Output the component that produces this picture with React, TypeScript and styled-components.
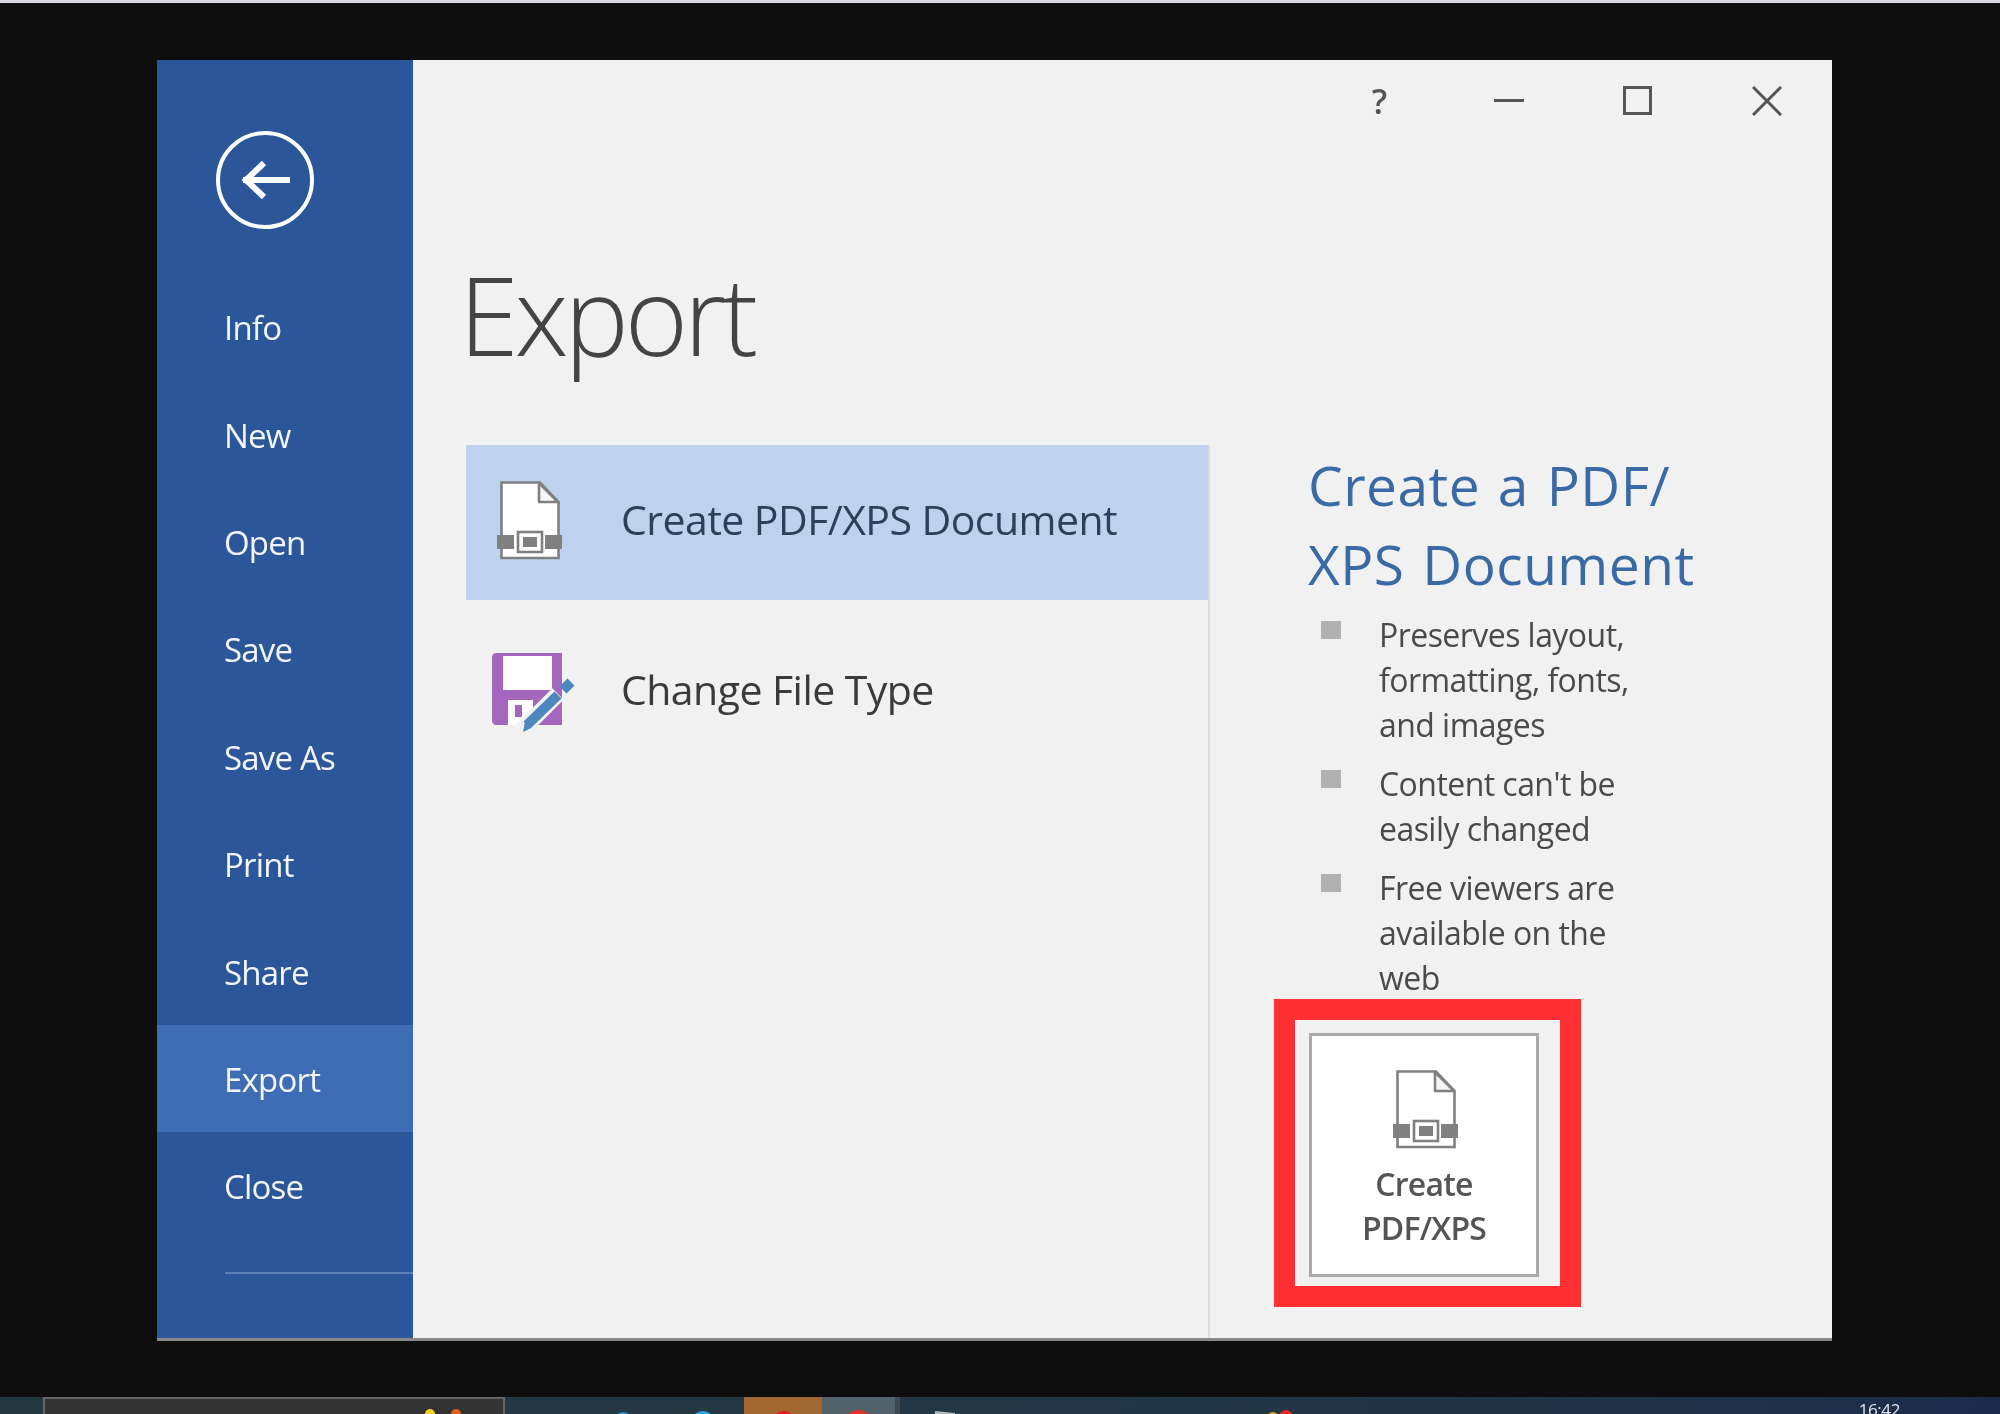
import React from 'react'
import styled, { createGlobalStyle } from 'styled-components'

const GlobalStyle = createGlobalStyle`
  html, body {
    margin: 0;
    padding: 0;
    background: #0e0e0e;
  }
  * {
    box-sizing: border-box;
  }
`

const Screen = styled.div`
  width: 2000px;
  height: 1414px;
  display: flex;
  flex-direction: column;
  overflow: hidden;
  font-family: "Open Sans", "Noto Sans", sans-serif;
  background: #0e0e0e;
  filter: blur(0.5px);
`

const TopEdge = styled.div`
  height: 3px;
  background: #d8d8e2;
`

const Stage = styled.div`
  flex: 1;
  padding: 57px 0 0 157px;
`

const Window = styled.div`
  width: 1675px;
  height: 1281px;
  display: flex;
  background: #f1f1f1;
  border-bottom: 3px solid #8a8a8a;
`

const Sidebar = styled.nav`
  width: 256px;
  flex-shrink: 0;
  display: flex;
  flex-direction: column;
  background: #2b579a;
  padding-top: 71px;
`

const BackButton = styled.div`
  width: 98px;
  height: 98px;
  margin-left: 59px;
  margin-bottom: 44px;
  color: #fff;
`

const MenuItem = styled.div<{ $active?: boolean }>`
  height: 107.4px;
  display: flex;
  align-items: center;
  padding: 2px 0 0 67px;
  font-size: 33px;
  letter-spacing: -0.8px;
  color: #f2f5fa;
  background: ${({ $active }) => ($active ? '#3e6db5' : 'transparent')};
`

const MenuRule = styled.div`
  height: 2px;
  margin: 32px 0 0 68px;
  background: #5b80b8;
`

const Main = styled.main`
  flex: 1;
  display: flex;
  flex-direction: column;
  min-width: 0;
`

const TitleBar = styled.div`
  height: 78px;
  display: flex;
  justify-content: flex-end;
  align-items: center;
  flex-shrink: 0;
  padding: 3px 1px 0 0;
`

const WinButton = styled.div`
  width: 129px;
  height: 60px;
  display: flex;
  justify-content: center;
  align-items: center;
  color: #555;
  font-size: 34px;
  font-weight: 600;
`

const PageTitle = styled.h1`
  margin: 0 0 0 46px;
  height: 307px;
  padding-top: 112px;
  font-size: 108px;
  line-height: 130px;
  font-weight: 300;
  letter-spacing: -4px;
  color: #444;
`

const Columns = styled.div`
  flex: 1;
  display: flex;
  min-height: 0;
`

const OptionList = styled.div`
  width: 797px;
  flex-shrink: 0;
  padding-left: 53px;
  border-right: 2px solid #dcdcdc;
`

const OptionRow = styled.div<{ $selected?: boolean }>`
  height: 155px;
  display: flex;
  align-items: center;
  background: ${({ $selected }) => ($selected ? '#bed2ee' : 'transparent')};
  margin-bottom: ${({ $selected }) => ($selected ? '15px' : '0')};
  color: ${({ $selected }) => ($selected ? '#2e3f58' : '#3a3a3a')};
  font-size: 41px;
  letter-spacing: -0.55px;
`

const OptionIcon = styled.div<{ $left: number; $up?: number }>`
  width: 155px;
  height: 100%;
  flex-shrink: 0;
  display: flex;
  justify-content: flex-start;
  align-items: center;
  padding-left: ${({ $left }) => $left}px;
  padding-bottom: ${({ $up }) => $up ?? 0}px;
`

const OptionLabel = styled.span`
  margin-bottom: 7px;
`

const Details = styled.div`
  flex: 1;
  display: flex;
  flex-direction: column;
  align-items: flex-start;
  padding: 0 0 0 97px;
`

const DetailsHeading = styled.h2`
  margin: 0 0 0 1px;
  font-size: 55px;
  line-height: 79px;
  font-weight: 400;
  letter-spacing: 0.5px;
  word-spacing: 3px;
  color: #3a6aa5;
`

const Bullets = styled.ul`
  list-style: none;
  margin: 9px 0 0 14px;
  padding: 0;
  display: flex;
  flex-direction: column;
  gap: 14px;
`

const Bullet = styled.li`
  display: flex;
  width: 340px;
  font-size: 32px;
  line-height: 45px;
  color: #4a4a4a;
  letter-spacing: -0.55px;

  &::before {
    content: '';
    width: 20px;
    height: 18px;
    margin-top: 9px;
    margin-right: 38px;
    flex-shrink: 0;
    background: #b1b1b1;
  }
`

const Highlight = styled.div`
  margin: -1px 0 0 -33px;
  width: 307px;
  height: 308px;
  padding: 13px 0 0 14px;
  border: 21px solid #ff3033;
  flex-shrink: 0;
`

const ExportButton = styled.div`
  width: 230px;
  height: 244px;
  display: flex;
  flex-direction: column;
  align-items: center;
  padding-top: 33px;
  background: #fff;
  border: 3px solid #aaa;
  color: #555;
`

const ButtonIcon = styled.div`
  height: 80px;
  margin-left: 3px;
`

const ButtonLabel = styled.div`
  font-size: 32px;
  line-height: 44px;
  font-weight: 600;
  text-align: center;
  letter-spacing: -0.8px;
  margin-top: 13px;
  white-space: nowrap;
`

const Taskbar = styled.footer`
  height: 17px;
  flex-shrink: 0;
  display: flex;
  align-items: flex-start;
  overflow: hidden;
  background: linear-gradient(90deg, #24383f 0%, #233844 55%, #1f3149 88%, #1c2b4d 100%);
`

const SearchBox = styled.div`
  width: 462px;
  height: 17px;
  margin-left: 43px;
  padding-left: 380px;
  display: flex;
  gap: 16px;
  background: #333;
  border: 2px solid #666;
  border-bottom: none;
  flex-shrink: 0;
`

const TaskSlot = styled.div<{ $w: number; $bg?: string }>`
  width: ${({ $w }) => $w}px;
  height: 17px;
  flex-shrink: 0;
  background: ${({ $bg }) => $bg ?? 'transparent'};
  display: flex;
  justify-content: center;
`

const TaskDot = styled.span<{ $color: string; $size: number; $top: number }>`
  width: ${({ $size }) => $size}px;
  height: ${({ $size }) => $size}px;
  margin-top: ${({ $top }) => $top}px;
  border-radius: 50%;
  background: ${({ $color }) => $color};
  flex-shrink: 0;
`

const Clock = styled.div`
  margin-left: auto;
  margin-right: 100px;
  font-size: 17px;
  line-height: 20px;
  margin-top: 3px;
  color: #e4e8ee;
  letter-spacing: -0.4px;
`

// the pdf page with its grey clasp, used in the list and on the button
function PdfIcon() {
  return (
    <svg width="66" height="80" viewBox="0 0 66 80" fill="none">
      <path d="M4.5 2.5H43L61.5 22V78H4.5Z" fill="#fff" />
      <path d="M4.5 55V2.5H43L61.5 22V55M4.5 69V78H61.5V69" stroke="#808080" strokeWidth="2.6" />
      <path d="M42 3V22H61Z" fill="#f4f4f4" stroke="#808080" strokeWidth="2.6" strokeLinejoin="round" />
      <rect x="0" y="55" width="17" height="14" fill="#808080" />
      <rect x="48" y="55" width="17" height="14" fill="#808080" />
      <rect x="21" y="52" width="24" height="20" fill="#fff" stroke="#808080" strokeWidth="2.6" />
      <rect x="26" y="57" width="14" height="10" fill="#808080" />
    </svg>
  )
}

function SaveAsIcon() {
  return (
    <svg width="84" height="84" viewBox="0 0 84 84" fill="none">
      <path d="M4 2H70V74H4C2 74 0 72 0 70V6C0 4 2 2 4 2Z" fill="#a566bd" />
      <rect x="11" y="5" width="49" height="34" fill="#fff" />
      <rect x="16" y="49" width="25" height="25" fill="#fff" />
      <rect x="23" y="54" width="7" height="12" fill="#a566bd" />
      <path d="M30 79L66 43" stroke="#f1f1f1" strokeWidth="16" />
      <path d="M35 74L66 44" stroke="#4d87bd" strokeWidth="10" />
      <path d="M71 39L79 31" stroke="#4d87bd" strokeWidth="10" />
      <path d="M31 81L33 71L39 77Z" fill="#4d87bd" />
    </svg>
  )
}

const menu = ['Info', 'New', 'Open', 'Save', 'Save As', 'Print', 'Share', 'Export', 'Close']

const bullets = [
  'Preserves layout, formatting, fonts, and images',
  "Content can't be easily changed",
  'Free viewers are available on the web',
]

export default function App() {
  return (
    <>
      <GlobalStyle />
      <Screen>
        <TopEdge />
        <Stage>
          <Window>
            <Sidebar>
              <BackButton>
                <svg width="98" height="98" viewBox="0 0 98 98" fill="none" stroke="currentColor">
                  <circle cx="49" cy="49" r="47" strokeWidth="4" />
                  <path d="M27 49H74" strokeWidth="6" />
                  <path d="M48 32L30 49L48 66" strokeWidth="6" />
                </svg>
              </BackButton>
              {menu.map((item) => (
                <MenuItem key={item} $active={item === 'Export'}>
                  {item}
                </MenuItem>
              ))}
              <MenuRule />
            </Sidebar>
            <Main>
              <TitleBar>
                <WinButton>?</WinButton>
                <WinButton>
                  <svg width="30" height="4" viewBox="0 0 30 4">
                    <rect width="30" height="3" fill="#555" />
                  </svg>
                </WinButton>
                <WinButton>
                  <svg width="29" height="29" viewBox="0 0 29 29" fill="none" stroke="#555" strokeWidth="3">
                    <rect x="1.5" y="1.5" width="26" height="26" />
                  </svg>
                </WinButton>
                <WinButton>
                  <svg width="30" height="30" viewBox="0 0 30 30" fill="none" stroke="#555" strokeWidth="3">
                    <path d="M1 1L29 29M29 1L1 29" />
                  </svg>
                </WinButton>
              </TitleBar>
              <PageTitle>Export</PageTitle>
              <Columns>
                <OptionList>
                  <OptionRow $selected>
                    <OptionIcon $left={31} $up={5}>
                      <PdfIcon />
                    </OptionIcon>
                    <OptionLabel>Create PDF/XPS Document</OptionLabel>
                  </OptionRow>
                  <OptionRow>
                    <OptionIcon $left={26}>
                      <SaveAsIcon />
                    </OptionIcon>
                    <OptionLabel>Change File Type</OptionLabel>
                  </OptionRow>
                </OptionList>
                <Details>
                  <DetailsHeading>
                    Create a PDF/
                    <br />
                    XPS Document
                  </DetailsHeading>
                  <Bullets>
                    {bullets.map((text) => (
                      <Bullet key={text}>
                        <span>{text}</span>
                      </Bullet>
                    ))}
                  </Bullets>
                  <Highlight>
                    <ExportButton>
                      <ButtonIcon>
                        <PdfIcon />
                      </ButtonIcon>
                      <ButtonLabel>
                        Create
                        <br />
                        PDF/XPS
                      </ButtonLabel>
                    </ExportButton>
                  </Highlight>
                </Details>
              </Columns>
            </Main>
          </Window>
        </Stage>
        <Taskbar>
          <SearchBox>
            <TaskDot $color="#f4d21f" $size={10} $top={10} />
            <TaskDot $color="#e8601c" $size={10} $top={10} />
          </SearchBox>
          <TaskSlot $w={80} />
          <TaskSlot $w={76}>
            <TaskDot $color="#2f8ed0" $size={18} $top={15} />
          </TaskSlot>
          <TaskSlot $w={83}>
            <TaskDot $color="#26a7e0" $size={24} $top={14} />
          </TaskSlot>
          <TaskSlot $w={78} $bg="#a26732">
            <TaskDot $color="#e81c24" $size={23} $top={14} />
          </TaskSlot>
          <TaskSlot $w={73} $bg="#52626b">
            <TaskDot $color="#e4332c" $size={29} $top={13} />
          </TaskSlot>
          <TaskSlot $w={5} $bg="#3c4a52" />
          <TaskSlot $w={90}>
            <svg width="22" height="17" viewBox="0 0 22 17">
              <path d="M1 14L21 16V17H1Z" fill="#b5b8b8" />
            </svg>
          </TaskSlot>
          <TaskSlot $w={270} />
          <TaskSlot $w={40}>
            <TaskDot $color="#d9a92b" $size={12} $top={15} />
            <TaskDot $color="#e02a2a" $size={14} $top={13} />
          </TaskSlot>
          <Clock>16:42</Clock>
        </Taskbar>
      </Screen>
    </>
  )
}
